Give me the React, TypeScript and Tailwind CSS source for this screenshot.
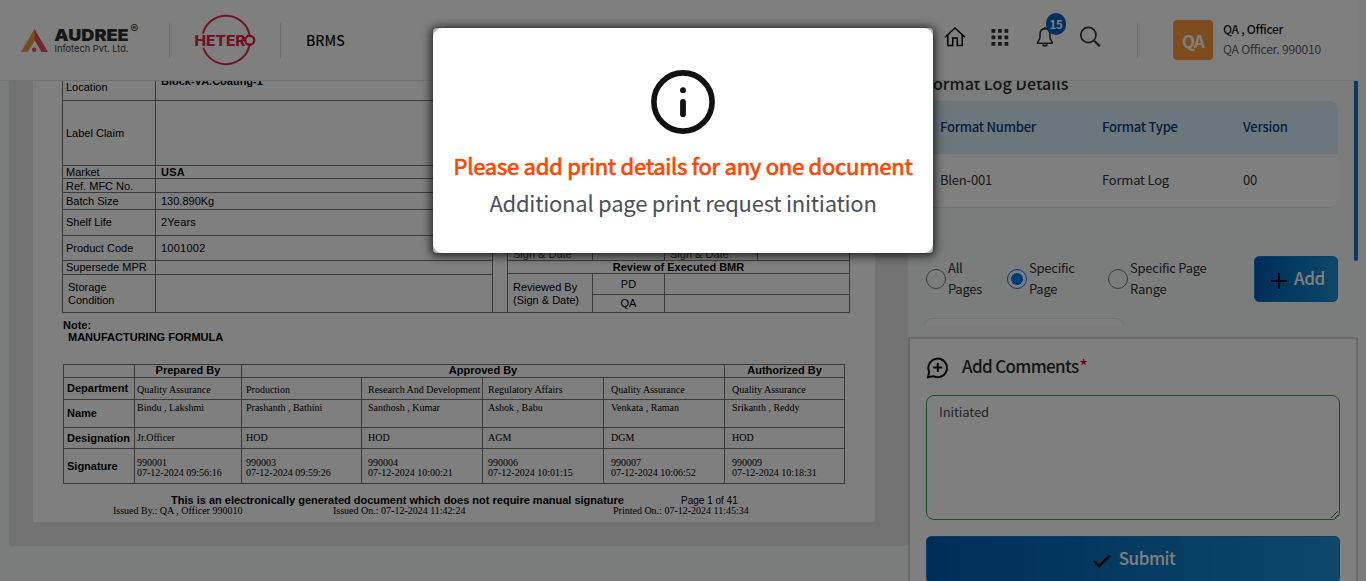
import React from "react";

const ui = "font-['Noto_Sans_CJK_SC',sans-serif]";
const doc = "font-['Liberation_Sans',sans-serif]";
const serif = "font-['Liberation_Serif',serif]";

type InfoRow = { label: React.ReactNode; value: string; h: string; labelCls: string; valueCls: string };

const infoRows: InfoRow[] = [
  { label: "Location", value: "Block-VA.Coating-1", h: "h-[20px]", labelCls: "pt-0", valueCls: "font-bold -mt-[6px]" },
  { label: "Label Claim", value: "", h: "h-[65px]", labelCls: "pt-[26px]", valueCls: "" },
  { label: "Market", value: "USA", h: "h-[13px]", labelCls: "", valueCls: "font-bold tracking-[0.2px]" },
  { label: "Ref. MFC No.", value: "", h: "h-[14px]", labelCls: "pt-[1px]", valueCls: "" },
  { label: "Batch Size", value: "130.890Kg", h: "h-[17px]", labelCls: "pt-[2px]", valueCls: "pt-[2px]" },
  { label: "Shelf Life", value: "2Years", h: "h-[26px]", labelCls: "pt-[6px]", valueCls: "pt-[6px] tracking-[0.2px]" },
  { label: "Product Code", value: "1001002", h: "h-[25px]", labelCls: "pt-[6px]", valueCls: "pt-[6px] tracking-[0.25px]" },
  { label: "Supersede MPR", value: "", h: "h-[14px]", labelCls: "", valueCls: "" },
];

const people = [
  { w: "w-[107px]", pad: "pl-[2px]", dept: "Quality Assurance", name: "Bindu , Lakshmi", role: "Jr.Officer", id: "990001", at: "07-12-2024 09:56:16" },
  { w: "w-[120px]", pad: "pl-[4px]", dept: "Production", name: "Prashanth , Bathini", role: "HOD", id: "990003", at: "07-12-2024 09:59:26" },
  { w: "w-[121px]", pad: "pl-[6px]", dept: "Research And Development", name: "Santhosh , Kumar", role: "HOD", id: "990004", at: "07-12-2024 10:00:21" },
  { w: "w-[121px]", pad: "pl-[5px]", dept: "Regulatory Affairs", name: "Ashok , Babu", role: "AGM", id: "990006", at: "07-12-2024 10:01:15" },
  { w: "w-[121px]", pad: "pl-[7px]", dept: "Quality Assurance", name: "Venkata , Raman", role: "DGM", id: "990007", at: "07-12-2024 10:06:52" },
  { w: "w-[120px]", pad: "pl-[7px]", dept: "Quality Assurance", name: "Srikanth , Reddy", role: "HOD", id: "990009", at: "07-12-2024 10:18:31" },
];

function AudreeLogo() {
  return (
    <svg width="120" height="34" viewBox="0 0 120 34">
      <path d="M13.5 9 L27 32 H20.5 L13.3 19.5 L9 17 Z" fill="#e6495c" />
      <path d="M13.5 9 L0 32 H6.5 L14.2 20 L13.5 19 Z" fill="#f39a35" />
      <circle cx="13.2" cy="29.8" r="2.2" fill="#e6495c" />
      <text x="33.2" y="21.2" textLength="74.5" lengthAdjust="spacingAndGlyphs" fontSize="16.5" fontWeight="900" fill="#2d2d2d" fontFamily="Inter, sans-serif">AUDREE</text>
      <text x="33.5" y="32" textLength="74" lengthAdjust="spacingAndGlyphs" fontSize="9.6" fill="#3c3c3c" fontFamily="Inter, sans-serif">Infotech Pvt. Ltd.</text>
      <text x="109.2" y="12.5" fontSize="12" fill="#2d2d2d" fontFamily="Inter, sans-serif">®</text>
    </svg>
  );
}

function HeteroLogo() {
  return (
    <svg width="62" height="52" viewBox="0 0 62 52" fill="none" stroke="#e5293e">
      <path d="M7.9 19.4 A24 24 0 0 1 54.6 21.2 M54.6 31 A24 24 0 0 1 8.3 33.7" strokeWidth="2" />
      <circle cx="54.7" cy="26.3" r="4.5" strokeWidth="2.4" />
      <text x="-0.5" y="31.6" textLength="51" lengthAdjust="spacingAndGlyphs" fontSize="14.7" fontWeight="800" fill="#e5293e" stroke="none" fontFamily="Inter, sans-serif">HETER</text>
    </svg>
  );
}

function Header() {
  return (
    <header className="flex h-[81px] w-[1358px] items-start border-b border-[#e2e4e6] bg-white">
      <div className="ml-[21px] mt-[20px]"><AudreeLogo /></div>
      <div className="ml-[28px] mt-[23px] h-[35px] w-px bg-[#dcdcdc]" />
      <div className="ml-[25px] mt-[14px]"><HeteroLogo /></div>
      <div className="ml-[23px] mt-[23px] h-[35px] w-px bg-[#dcdcdc]" />
      <div className="ml-[25px] mt-[30px] text-[14px] font-medium leading-[20px] text-[#111]">BRMS</div>
      <div className="ml-auto flex items-start">
        <svg className="-ml-px mt-[26px]" width="22" height="22" viewBox="0 0 22 22" fill="none" stroke="#000" strokeWidth="1.5" strokeLinejoin="miter">
          <path d="M1 11.3 L11 2 L21 11.3 M3.8 9 V19.5 H8.7 V12 H13.3 V19.5 H18.2 V9" />
        </svg>
        <svg className="ml-[25px] mt-[28px]" width="18" height="18" viewBox="0 0 18 18" fill="#333">
          {[0, 6.5, 13].map((y) => [0, 6.5, 13].map((x) => <rect key={`${x}-${y}`} x={x + 0.5} y={y + 0.9} width="3.8" height="3.8" rx="0.5" />))}
        </svg>
        <div className="relative ml-[27px] mt-[26px]">
          <svg width="18" height="22" viewBox="0 0 18 22" fill="none" stroke="#333" strokeWidth="1.6" strokeLinejoin="round">
            <path d="M9 2.6 C5.7 2.9 4 5.2 4 8 V11.5 C4 13.5 1.6 15 1.6 17.2 H16.4 C16.4 15 14 13.5 14 11.5 V8 C14 5.2 12.3 2.9 9 2.6 Z M9 2.6 V1" />
            <path d="M6.6 18.4 A2.6 2.2 0 0 0 11.4 18.4" strokeWidth="1.8" />
          </svg>
          <span className="absolute -top-[13px] left-[10px] flex h-[22px] w-[20px] items-center justify-center rounded-full bg-[#0062c4] pt-px text-[11.5px] font-bold tracking-[-0.2px] text-white">15</span>
        </div>
        <svg className="ml-[26px] mt-[26px]" width="22" height="22" viewBox="0 0 22 22" fill="none" stroke="#333" strokeWidth="1.7">
          <circle cx="8.4" cy="9" r="7.6" />
          <path d="M14.4 15 L19.8 20.2" strokeWidth="2.2" />
        </svg>
        <div className="ml-[35px] mt-[23px] h-[35px] w-px bg-[#dcdcdc]" />
        <div className="ml-[35px] mt-[20px] flex h-[40px] w-[40px] items-center justify-center rounded-[4px] bg-[#ff983c] pt-px text-[17px] font-bold tracking-[-0.8px] text-white">QA</div>
        <div className="ml-[10px] mt-[19px] w-[135px] text-[12px] leading-[20px]">
          <div className="font-medium tracking-[-0.3px] text-[#1c1c1c]">QA , Officer</div>
          <div className="tracking-[-0.18px] text-[#5c6066]">QA Officer. 990010</div>
        </div>
      </div>
    </header>
  );
}

function InfoTable() {
  return (
    <div className="w-[431px] border-l border-[#777]">
      {infoRows.map((r) => (
        <div key={String(r.label)} className={`flex border-b border-r border-[#777] ${r.h}`}>
          <div className={`w-[93px] shrink-0 border-r border-[#777] pl-[3px] ${r.labelCls}`}>{r.label}</div>
          <div className={`pl-[5px] ${r.valueCls}`}>{r.value}</div>
        </div>
      ))}
      <div className="flex h-[38px] border-b border-r border-[#777]">
        <div className="w-[93px] border-r border-[#777] pl-[5px] pt-[6px]">Storage<br />Condition</div>
      </div>
    </div>
  );
}

function ReviewTable() {
  return (
    <div className="flex w-[343px] flex-col justify-end border-l border-[#777]">
      <div className="flex h-[20px] border-b border-r border-[#777] text-[#444]">
        <div className="w-[85px] border-r border-[#777] pl-[5px] pt-[7px]">Sign &amp; Date</div>
        <div className="w-[72px] border-r border-[#777]" />
        <div className="w-[93px] border-r border-[#777] pl-[5px] pt-[7px]">Sign &amp; Date</div>
      </div>
      <div className="h-[13px] border-b border-r border-[#777] text-center font-bold">Review of Executed BMR</div>
      <div className="flex h-[39px] border-b border-r border-[#777]">
        <div className="w-[85px] border-r border-[#777] pl-[5px] pt-[7px]">Reviewed By<br />(Sign &amp; Date)</div>
        <div className="w-[72px] border-r border-[#777] text-center">
          <div className="h-[21px] border-b border-[#777] pt-[4px]">PD</div>
          <div className="pt-[2px]">QA</div>
        </div>
        <div className="h-[21px] flex-1 border-b border-[#777]" />
      </div>
    </div>
  );
}

function SignTable() {
  const cell = "border-b border-[#777]";
  return (
    <div className={`ml-[30px] w-[782px] border-l border-t border-[#777] ${doc}`}>
      <div className="flex h-[13px] border-b border-[#777] text-center font-bold leading-[11px]">
        <div className="w-[71px] border-r border-[#777]" />
        <div className="w-[107px] border-r border-[#777]">Prepared By</div>
        <div className="w-[483px] border-r border-[#777]">Approved By</div>
        <div className="w-[120px] border-r border-[#777]">Authorized By</div>
      </div>
      <div className="flex">
        <div className="w-[71px] shrink-0 border-r border-[#777] font-bold">
          <div className={`h-[22px] pl-[3px] pt-[4px] ${cell}`}>Department</div>
          <div className={`h-[28px] pl-[3px] pt-[7px] ${cell}`}>Name</div>
          <div className={`h-[21px] pl-[3px] pt-[4px] ${cell}`}>Designation</div>
          <div className={`h-[35px] pl-[3px] pt-[11px] ${cell}`}>Signature</div>
        </div>
        {people.map((p) => (
          <div key={p.id} className={`shrink-0 whitespace-nowrap border-r border-[#777] text-[10px] leading-[10px] ${serif} ${p.w}`}>
            <div className={`h-[22px] pt-[7px] ${cell} ${p.pad}`}>{p.dept}</div>
            <div className={`h-[28px] pt-[3px] ${cell} ${p.pad}`}>{p.name}</div>
            <div className={`h-[21px] pt-[5px] ${cell} ${p.pad}`}>{p.role}</div>
            <div className={`h-[35px] pt-[9px] ${cell} ${p.pad}`}>{p.id}<br />{p.at}</div>
          </div>
        ))}
      </div>
    </div>
  );
}

function DocumentPane() {
  return (
    <div className="w-[908px] shrink-0 pl-[9px]">
      <div className="h-[465px] bg-[#e6e6e6] pl-[24px]">
        <div className={`h-[441px] w-[842px] overflow-hidden bg-white text-[11px] leading-[13px] text-black ${doc}`}>
          <div className="flex pl-[29px]">
            <InfoTable />
            <div className="w-[14px] border-b border-[#777]" />
            <ReviewTable />
          </div>
          <div className="pl-[30px] pt-[6px] font-bold leading-[12px]">
            Note:
            <div className="pl-[5px]">MANUFACTURING FORMULA</div>
          </div>
          <div className="h-[21px]" />
          <SignTable />
          <div className="mt-[10px] flex pl-[138px]">
            <div className="w-[510px] whitespace-nowrap font-bold">This is an electronically generated document which does not require manual signature</div>
            <div className="text-[10px]">Page 1 of 41</div>
          </div>
          <div className={`-mt-px flex pl-[80px] text-[10px] leading-[10px] ${serif}`}>
            <div className="w-[220px]">Issued By.: QA , Officer 990010</div>
            <div className="w-[280px]">Issued On.: 07-12-2024 11:42:24</div>
            <div>Printed On.: 07-12-2024 11:45:34</div>
          </div>
        </div>
      </div>
    </div>
  );
}

function RadioOption({ first, second, on, w }: { first: string; second: string; on?: boolean; w: string }) {
  return (
    <label className={`flex items-center ${w}`}>
      <span className={`flex h-[20px] w-[20px] shrink-0 items-center justify-center rounded-full border bg-[#f6faf8] ${on ? "border-[#0075ff]" : "border-[#767676]"}`}>
        {on && <span className="h-[12px] w-[12px] rounded-full bg-[#0075ff]" />}
      </span>
      <span className="-mt-[2px] ml-[2px] whitespace-nowrap text-[13px] leading-[21px] tracking-[-0.25px] text-[#333]">{first}<br />{second}</span>
    </label>
  );
}

function SidePane() {
  return (
    <div className="flex w-[450px] shrink-0 flex-col">
      <div className="flex h-[256px] shrink-0 justify-between overflow-hidden pl-[16px]">
        <div className="w-[414px]">
          <h2 className="-mt-[9px] h-[29px] text-[16px] font-medium leading-[22px] tracking-[0.1px] text-[#2b2b2b]">Format Log Details</h2>
          <div className="overflow-hidden rounded-[8px] border-b border-[#e4e4e4] bg-white text-[13px]">
            <div className="flex h-[53px] items-center bg-[#d6ecfb] pb-[2px] pl-[16px] font-medium tracking-[-0.22px] text-[#0a3f7a]">
              <div className="w-[162px]">Format Number</div><div className="w-[141px]">Format Type</div><div>Version</div>
            </div>
            <div className="flex h-[53px] items-center pb-[2px] pl-[16px] tracking-[-0.2px] text-[#333]">
              <div className="w-[162px]">Blen-001</div><div className="w-[141px]">Format Log</div><div>00</div>
            </div>
          </div>
          <div className="mt-[48px] flex h-[46px] items-center pl-[2px]">
            <RadioOption first="All" second="Pages" w="w-[81px]" />
            <RadioOption first="Specific" second="Page" w="w-[101px]" on />
            <RadioOption first="Specific Page" second="Range" w="w-[146px]" />
            <button className="flex h-[46px] w-[84px] items-center rounded-[5px] border border-[#0f7fc4] bg-linear-to-r from-[#005bb5] to-[#1c90d4] pl-[16px] text-[17px] font-medium tracking-[-0.4px] text-white">
              <svg className="mt-[3px]" width="16" height="16" viewBox="0 0 16 16" stroke="#000" strokeWidth="1.8"><path d="M8 0 V16 M0 8 H16" /></svg>
              <span className="-mt-[2px] ml-[7px]">Add</span>
            </button>
          </div>
          <div className="mt-[16px] h-[7px] w-[200px] overflow-hidden">
            <div className="h-[30px] rounded-[8px] border border-[#e2e4e4] bg-white" />
          </div>
        </div>
        <div className="h-[180px] w-[4px] rounded-b-[2px] bg-linear-to-r from-[#0a70c0] to-[#1281cc]" />
      </div>
      <div className="h-[260px] shrink-0 border-2 border-[#d4d4d4] bg-white px-[16px]">
        <div className="flex h-[56px] items-center">
          <svg width="23" height="23" viewBox="0 0 23 23" fill="none" stroke="#111" strokeWidth="2" strokeLinejoin="miter">
            <path d="M2 21.3 L3.2 15.8 A9.3 9.3 0 1 1 7.4 20.2 Z" />
            <path d="M11.8 7 V16 M7.3 11.5 H16.3" />
          </svg>
          <h2 className="-mt-[2px] ml-[13px] text-[17px] font-medium tracking-[-0.65px] text-[#2b2b2b]">Add Comments<span className="ml-px text-[#f00018]">*</span></h2>
        </div>
        <textarea defaultValue="Initiated" className="block h-[125px] w-[414px] rounded-[8px] border border-[#28a745] bg-white px-[12px] py-[5px] text-[13px] leading-[21px] tracking-[-0.1px] text-[#495057]" />
        <button className="mt-[16px] flex h-[47px] w-[414px] items-center justify-center rounded-[5px] border border-[#0f7fc4] bg-linear-to-r from-[#005bb5] to-[#1c90d4] pl-[2px] text-[17px] font-medium tracking-[-0.45px] text-white">
          <svg className="mt-[2px]" width="18" height="14" viewBox="0 0 18 14" fill="none" stroke="#000" strokeWidth="2.4"><path d="M1 7 L6 12 L17 1.5" /></svg>
          <span className="-mt-[3px] ml-[8px]">Submit</span>
        </button>
      </div>
    </div>
  );
}

function Dialog() {
  return (
    <div className="absolute inset-0 flex items-start justify-center bg-black/50 pt-[28px]">
      <div className="h-[225px] w-[500px] rounded-[4px] bg-[#b0b0b0] shadow-[0_1px_10px_2px_rgba(0,0,0,0.75)]">
        <div className="flex h-[225px] flex-col items-center rounded-[9px] bg-white pt-[42px]">
          <svg width="64" height="64" viewBox="0 0 64 64" fill="none" stroke="#111">
            <circle cx="32" cy="32" r="29.1" strokeWidth="5.6" />
            <path d="M32 32 V44.2" strokeWidth="5.8" strokeLinecap="round" />
            <circle cx="32" cy="20.2" r="2.9" fill="#111" stroke="none" />
          </svg>
          <div className="mt-[13px] whitespace-nowrap text-[22px] leading-[37px] tracking-[-0.25px] text-[#ff4500] [-webkit-text-stroke:0.7px_#ff4500]">Please add print details for any one document</div>
          <div className="whitespace-nowrap text-[22px] leading-[36px] tracking-[-0.24px] text-[#495057]">Additional page print request initiation</div>
        </div>
      </div>
    </div>
  );
}

export default function App() {
  return (
    <div className={`relative h-[581px] w-[1366px] overflow-hidden bg-[#f6faf8] ${ui}`}>
      <Header />
      <main className="flex h-[500px] w-[1358px] overflow-hidden">
        <DocumentPane />
        <SidePane />
      </main>
      <Dialog />
    </div>
  );
}
